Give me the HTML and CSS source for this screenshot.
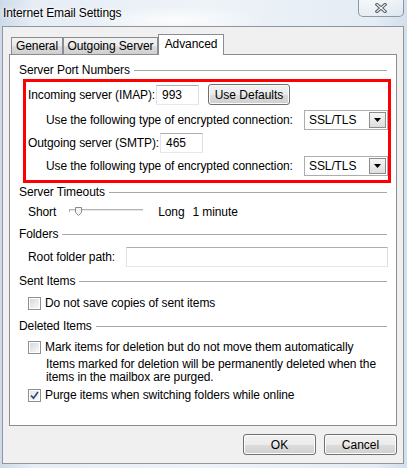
FILE: index.html
```html
<!DOCTYPE html>
<html lang="en">
<head>
  <meta charset="UTF-8">
  <title>Internet Email Settings</title>
  <link rel="stylesheet" href="styles.css">
</head>
<body>

<div class="titlebar">
  <span class="title">Internet Email Settings</span>
  <div class="close-btn">
    <svg width="12" height="10" viewBox="0 0 12 10">
      <path d="M2 1.5 L10 8.5 M10 1.5 L2 8.5" stroke="#5d6166" stroke-width="3.2" stroke-linecap="square"/>
      <path d="M2 1.5 L10 8.5 M10 1.5 L2 8.5" stroke="#f3f4f5" stroke-width="1.2" stroke-linecap="square"/>
    </svg>
  </div>
</div>

<div class="dialog">
  <div class="tabs">
    <div class="tab tab-general">General</div>
    <div class="tab tab-outgoing">Outgoing Server</div>
    <div class="tab tab-advanced active">Advanced</div>
  </div>

  <div class="panel">
    <div class="group-title gt-ports"><span>Server Port Numbers</span></div>

    <div class="highlight">
      <div class="row row-imap">
        <label class="port-label">Incoming server (IMAP):</label>
        <input type="text" class="port" value="993">
        <button class="btn btn-defaults">Use Defaults</button>
      </div>
      <div class="row row-enc row-enc-in">
        <span>Use the following type of encrypted connection:</span>
        <div class="combo">
          <span>SSL/TLS</span>
          <span class="combo-arrow">
            <svg width="7" height="4" viewBox="0 0 7 4"><path d="M0 0 H7 L3.5 4 Z" fill="#000"/></svg>
          </span>
        </div>
      </div>
      <div class="row row-smtp">
        <label class="port-label port-label-smtp">Outgoing server (SMTP):</label>
        <input type="text" class="port" value="465">
      </div>
      <div class="row row-enc row-enc-out">
        <span>Use the following type of encrypted connection:</span>
        <div class="combo">
          <span>SSL/TLS</span>
          <span class="combo-arrow">
            <svg width="7" height="4" viewBox="0 0 7 4"><path d="M0 0 H7 L3.5 4 Z" fill="#000"/></svg>
          </span>
        </div>
      </div>
    </div>

    <div class="group-title gt-timeouts"><span>Server Timeouts</span></div>
    <div class="slider-row">
      <span>Short</span>
      <svg class="slider" width="74" height="16" viewBox="0 0 74 16">
        <rect x="0" y="5" width="74" height="1" fill="#b4b4b4"/>
        <rect x="0" y="6" width="74" height="1" fill="#e8e8e8"/>
        <rect x="0" y="5" width="1" height="3" fill="#b4b4b4"/>
        <path d="M6.5 3.5 H12.5 V8.5 L9.5 11.5 L6.5 8.5 Z" fill="#f3f3f3" stroke="#8b8b8b"/>
      </svg>
      <span class="slider-long">Long</span>
      <span class="slider-value">1 minute</span>
    </div>

    <div class="group-title gt-folders"><span>Folders</span></div>
    <div class="folder-row">
      <label class="folder-label">Root folder path:</label>
      <input type="text" class="folder-input" value="">
    </div>

    <div class="group-title gt-sent"><span>Sent Items</span></div>
    <div class="check-row cr-sent">
      <span class="check"></span>
      <span>Do not save copies of sent items</span>
    </div>

    <div class="group-title gt-deleted"><span>Deleted Items</span></div>
    <div class="check-row cr-mark">
      <span class="check"></span>
      <span>Mark items for deletion but do not move them automatically</span>
    </div>
    <div class="note">Items marked for deletion will be permanently deleted when the<br>items in the mailbox are purged.</div>
    <div class="check-row cr-purge">
      <span class="check checked">
        <svg width="9" height="9" viewBox="0 0 9 9"><path d="M1 4.5 L3.5 7.2 L8 1" fill="none" stroke="#2f4a7a" stroke-width="1.7"/></svg>
      </span>
      <span>Purge items when switching folders while online</span>
    </div>
  </div>

  <div class="footer">
    <button class="btn btn-footer">OK</button>
    <button class="btn btn-footer">Cancel</button>
  </div>
</div>

</body>
</html>
```

FILE: styles.css
```css
body {
  margin: 0;
  width: 407px;
  height: 468px;
  overflow: hidden;
  font-family: "Liberation Sans", Arial, sans-serif;
  font-size: 12px;
  letter-spacing: -0.1px;
  color: #000;
  background:
    radial-gradient(ellipse 90px 14px at 175px 20px, rgba(255, 255, 255, 0.8), rgba(255, 255, 255, 0)),
    linear-gradient(90deg, #cddbe9 0%, #e6edf5 8%, #eef3f8 50%, #e4ecf4 92%, #d3dfec 100%);
}

.titlebar {
  height: 26px;
  display: flex;
  justify-content: space-between;
  align-items: flex-start;
  padding: 0 3px 0 3px;
  box-sizing: border-box;
}

.title {
  margin-top: 6px;
  line-height: 14px;
  text-shadow: 0 0 6px #fff, 0 0 3px #fff;
}

.close-btn {
  width: 46px;
  height: 17px;
  box-sizing: border-box;
  border: 1px solid rgba(80, 90, 105, 0.6);
  border-top: none;
  border-radius: 0 0 5px 5px;
  background: linear-gradient(rgba(255, 255, 255, 0.55), rgba(235, 240, 245, 0.35));
  display: flex;
  align-items: center;
  justify-content: center;
}

.dialog {
  margin: 0 3px 0 2px;
  height: 438px;
  box-sizing: border-box;
  border: 1px solid #8e959c;
  background: #f0f0f0;
  padding: 7px 6px 8px 6px;
}

/* tabs */
.tabs {
  display: flex;
  align-items: flex-end;
  height: 20px;
  padding-left: 2px;
}

.tab {
  height: 17px;
  box-sizing: border-box;
  border: 1px solid #898c95;
  border-bottom: none;
  background: linear-gradient(#f2f2f2, #ebebeb 50%, #dddddd 50%, #cfcfcf);
  text-align: center;
  line-height: 16px;
}

.tab-general { width: 52px; }
.tab-outgoing { width: 95px; }
.tab-advanced { width: 66px; }

.tab.active {
  height: 21px;
  margin-bottom: -1px;
  position: relative;
  background: #fff;
  line-height: 18px;
}

.panel {
  height: 372px;
  box-sizing: border-box;
  border: 1px solid #898c95;
  background: #fff;
  padding: 0 9px;
}

/* group headers */
.group-title {
  display: flex;
  align-items: center;
  height: 16px;
  line-height: 16px;
}

.group-title::after {
  content: "";
  flex: 1;
  height: 1px;
  margin-left: 4px;
  background: #a8a8a8;
}

.gt-ports { margin-top: 7px; }
.gt-timeouts { margin-top: 1px; }
.gt-folders { margin-top: 6px; }
.gt-sent { margin-top: 6px; }
.gt-deleted { margin-top: 8px; }

/* red highlight box */
.highlight {
  margin: 1px -4px 0 4px;
  border: 3px solid #f00;
  padding: 2px 0 4px 2px;
}

.row {
  display: flex;
  align-items: center;
  height: 20px;
  white-space: nowrap;
}

.row-imap { height: 21px; }
.row-enc-in { margin-top: 5px; }
.row-smtp { margin-top: 3px; }
.row-enc-out { margin-top: 3px; }

.row-enc { padding-left: 18px; }

.port-label {
  width: 128px;
  flex-shrink: 0;
}

.port-label-smtp { width: 132px; }

.port {
  width: 43px;
  height: 20px;
  flex-shrink: 0;
  box-sizing: border-box;
  border: 1px solid;
  border-color: #abadb3 #dbdfe6 #e3e9ef #e2e3ea;
  padding: 0 0 0 5px;
  font: inherit;
  color: #000;
}

.combo {
  margin-left: auto;
  width: 84px;
  height: 20px;
  box-sizing: border-box;
  border: 1px solid #abadb3;
  background: #fff;
  display: flex;
  align-items: center;
  padding: 0 1px 0 4px;
}

.combo-arrow {
  margin-left: auto;
  width: 17px;
  height: 16px;
  box-sizing: border-box;
  border: 1px solid #8d8d8d;
  background: linear-gradient(#f6f6f6, #dedede);
  display: flex;
  align-items: center;
  justify-content: center;
}

/* buttons */
.btn {
  height: 21px;
  box-sizing: border-box;
  border: 1px solid #707070;
  border-radius: 3px;
  background: linear-gradient(#f2f2f2, #ebebeb 50%, #dddddd 50%, #cfcfcf);
  box-shadow: inset 0 0 0 1px #fcfcfc;
  font: inherit;
  color: #000;
  padding: 0;
}

.btn-defaults {
  width: 82px;
  margin-left: 9px;
  flex-shrink: 0;
}

/* timeout slider */
.slider-row {
  display: flex;
  align-items: center;
  height: 16px;
  margin-top: 4px;
  padding-left: 9px;
}

.slider { margin-left: 13px; }
.slider-long { margin-left: 15px; }
.slider-value { margin-left: 8px; }

/* folders */
.folder-row {
  display: flex;
  align-items: center;
  height: 20px;
  margin: 5px -1px 0 0;
  padding-left: 9px;
}

.folder-label {
  width: 98px;
  white-space: nowrap;
}

.folder-input {
  flex: 1;
  height: 20px;
  box-sizing: border-box;
  border: 1px solid;
  border-color: #abadb3 #dbdfe6 #e3e9ef #e2e3ea;
  font: inherit;
}

/* checkboxes */
.check-row {
  display: flex;
  align-items: center;
  gap: 4px;
  height: 14px;
  padding-left: 9px;
  white-space: nowrap;
}

.cr-sent { margin-top: 7px; }
.cr-mark { margin-top: 6px; }
.cr-purge { margin-top: 4px; }

.check {
  width: 13px;
  height: 13px;
  flex-shrink: 0;
  box-sizing: border-box;
  border: 1px solid #8e8f8f;
  padding: 1px;
  background: linear-gradient(135deg, #d6d9dd, #f8f8f8) content-box, #fff;
  display: flex;
  align-items: center;
  justify-content: center;
}

.check.checked {
  background: linear-gradient(135deg, #e4e6e9, #fbfbfb) content-box, #fff;
}

.note {
  margin-top: 4px;
  padding-left: 27px;
  line-height: 13px;
  white-space: nowrap;
}

/* footer */
.footer {
  display: flex;
  justify-content: flex-end;
  gap: 8px;
  margin-top: 8px;
}

.btn-footer { width: 73px; }
```
